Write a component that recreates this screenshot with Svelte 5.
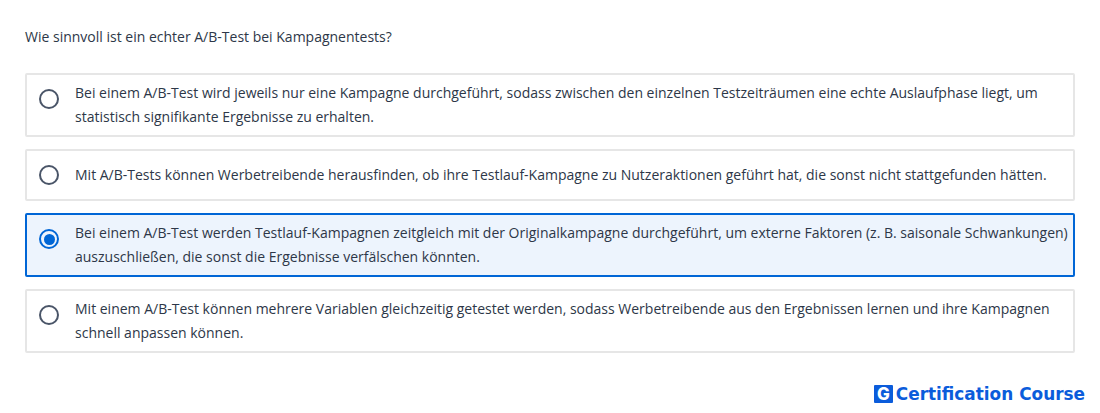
<script>
  const options = [
    { text: 'Bei einem A/B-Test wird jeweils nur eine Kampagne durchgeführt, sodass zwischen den einzelnen Testzeiträumen eine echte Auslaufphase liegt, um statistisch signifikante Ergebnisse zu erhalten.' },
    { text: 'Mit A/B-Tests können Werbetreibende herausfinden, ob ihre Testlauf-Kampagne zu Nutzeraktionen geführt hat, die sonst nicht stattgefunden hätten.' },
    { text: 'Bei einem A/B-Test werden Testlauf-Kampagnen zeitgleich mit der Originalkampagne durchgeführt, um externe Faktoren (z. B. saisonale Schwankungen) auszuschließen, die sonst die Ergebnisse verfälschen könnten.', selected: true },
    { text: 'Mit einem A/B-Test können mehrere Variablen gleichzeitig getestet werden, sodass Werbetreibende aus den Ergebnissen lernen und ihre Kampagnen schnell anpassen können.' }
  ];
</script>

<main>
  <p class="frage">Wie sinnvoll ist ein echter A/B-Test bei Kampagnentests?</p>
  <div class="liste">
    {#each options as o}
      <div class="option" class:selected={o.selected}>
        <span class="radio"></span>
        <span class="text">{o.text}</span>
      </div>
    {/each}
  </div>
  <div class="marke">
    <span class="logo">G</span>
    <span class="name">Certification Course</span>
  </div>
</main>

<style>
  :global(body) {
    background: #fff;
  }
  main {
    width: 1100px;
    height: 413px;
    padding: 28px 25px 0;
    box-sizing: border-box;
    font-family: 'Open Sans', sans-serif;
    color: #2d3748;
    overflow: hidden;
  }
  .frage {
    margin: 0 0 27px;
    font-size: 14px;
    line-height: 18px;
  }
  .liste {
    display: flex;
    flex-direction: column;
    gap: 12px;
  }
  .option {
    display: flex;
    align-items: center;
    gap: 16px;
    min-height: 36px;
    padding: 6px 4px 6px 12px;
    border: 2px solid #e6e6e6;
    border-radius: 2px;
    font-size: 14px;
    line-height: 24px;
  }
  .option.selected {
    border-color: #0066d6;
    background: #edf4fd;
  }
  .radio {
    flex: none;
    box-sizing: border-box;
    width: 20px;
    height: 20px;
    margin-top: -12px;
    border: 2.5px solid #4a5568;
    border-radius: 50%;
    position: relative;
  }
  .option:nth-child(2) .radio {
    margin-top: 0;
  }
  .selected .radio {
    border-color: #0066d6;
  }
  .selected .radio::after {
    content: '';
    position: absolute;
    inset: 2.5px;
    border-radius: 50%;
    background: #0066d6;
  }
  .marke {
    display: flex;
    justify-content: flex-end;
    align-items: center;
    gap: 3px;
    margin-top: 31px;
    margin-right: -10px;
  }
  .logo {
    width: 19px;
    height: 18px;
    background: #0b5cdb;
    color: #fff;
    font: 800 17px/18px Inter, sans-serif;
    text-align: center;
    border-radius: 1px;
  }
  .name {
    font: 700 16.9px/20px 'DejaVu Sans', sans-serif;
    color: #0b5cdb;
  }
</style>
